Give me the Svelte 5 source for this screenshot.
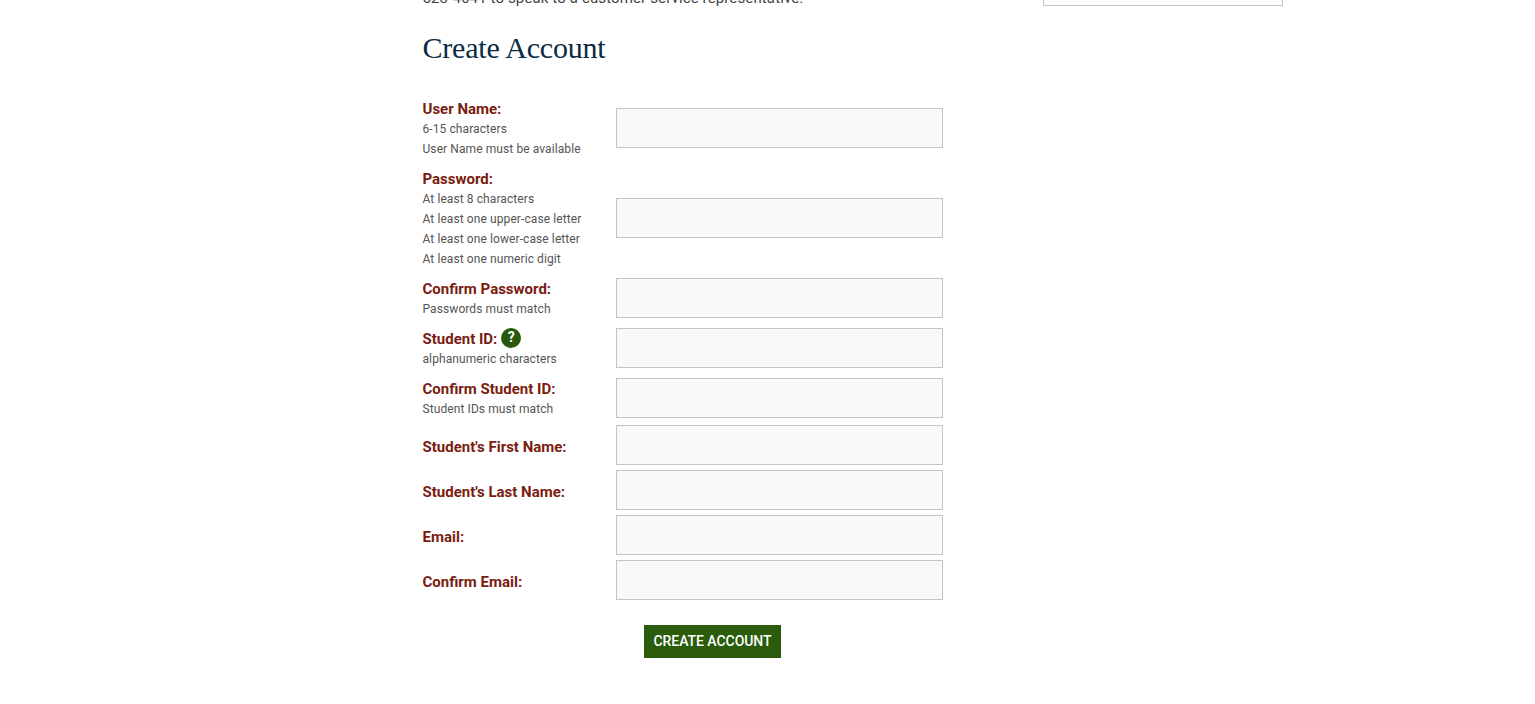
<script lang="ts">
  type Field = { label: string; hints?: string[]; help?: boolean; kind: string; type?: string };

  const fields: Field[] = [
    { label: 'User Name:', hints: ['6-15 characters', 'User Name must be available'], kind: 'three' },
    {
      label: 'Password:',
      hints: ['At least 8 characters', 'At least one upper-case letter', 'At least one lower-case letter', 'At least one numeric digit'],
      kind: 'five',
      type: 'password'
    },
    { label: 'Confirm Password:', hints: ['Passwords must match'], kind: 'two', type: 'password' },
    { label: 'Student ID:', hints: ['alphanumeric characters'], help: true, kind: 'two' },
    { label: 'Confirm Student ID:', hints: ['Student IDs must match'], kind: 'two last' },
    { label: "Student's First Name:", kind: 'one' },
    { label: "Student's Last Name:", kind: 'one' },
    { label: 'Email:', kind: 'one', type: 'email' },
    { label: 'Confirm Email:', kind: 'one', type: 'email' }
  ];
</script>

<div class="page">
  <main class="content">
    <p class="intro">523-4641 to speak to a customer service representative.</p>
    <h1>Create Account</h1>
    <form onsubmit={(e) => e.preventDefault()}>
      {#each fields as f}
        <div class="row {f.kind}">
          <div class="label">
            <label for={f.label}>{f.label}</label>
            {#if f.help}
              <span class="help">?</span>
            {/if}
            {#each f.hints ?? [] as hint}
              <span class="hint">{hint}</span>
            {/each}
          </div>
          <input id={f.label} type={f.type ?? 'text'} />
        </div>
      {/each}
      <button type="submit">CREATE ACCOUNT</button>
    </form>
  </main>
  <aside class="side"></aside>
</div>

<style>
  :global(body) {
    margin: 0;
    background: #fff;
    font-family: Roboto, "Liberation Sans", sans-serif;
  }

  .page {
    display: flex;
    justify-content: space-between;
    align-items: flex-start;
    width: 861px;
    height: 704px;
    margin-left: 422px;
    overflow: hidden;
  }

  .content {
    width: 521px;
  }

  .intro {
    margin: -12px 0 0;
    padding-left: 0.5px;
    font-size: 15px;
    line-height: 20px;
    letter-spacing: 0.13px;
    color: #444;
  }

  h1 {
    margin: 19px 0 0;
    padding-left: 0.5px;
    font-family: "Liberation Serif", serif;
    font-size: 30px;
    line-height: 42px;
    font-weight: 400;
    letter-spacing: -0.2px;
    color: #0b2b45;
  }

  form {
    margin-top: 30px;
  }

  .row {
    display: flex;
    justify-content: space-between;
    align-items: center;
    height: 40px;
    margin-bottom: 10px;
  }

  .row.three {
    height: 60px;
  }

  .row.five {
    height: 100px;
  }

  .row.two.last {
    margin-bottom: 8px;
  }

  .row.one {
    margin-bottom: 5px;
  }

  .label {
    box-sizing: border-box;
    width: 194px;
    min-width: 0;
    padding-left: 0.5px;
  }

  label {
    font-size: 15px;
    line-height: 20px;
    font-weight: 700;
    color: #7a1c10;
  }

  .hint {
    display: block;
    font-size: 12px;
    line-height: 20px;
    letter-spacing: 0.09px;
    color: #555;
  }

  .help {
    display: inline-block;
    width: 20px;
    height: 20px;
    margin-top: -4px;
    margin-bottom: -2px;
    border-radius: 50%;
    background: #275a0c;
    color: #fff;
    font-size: 14px;
    line-height: 19px;
    font-weight: 700;
    text-align: center;
    vertical-align: 2px;
  }

  input {
    box-sizing: border-box;
    width: 327px;
    height: 40px;
    margin: 0 0 2px;
    border: 1px solid #c4c4c4;
    background: #f9f9f9;
  }

  .one input {
    margin-bottom: 4px;
  }

  button {
    display: block;
    width: 137px;
    height: 33px;
    margin: 23px 0 0 222px;
    padding: 0 0 1px;
    border: 0;
    background: #2b5c0b;
    color: #fff;
    font-family: inherit;
    font-size: 14px;
    font-weight: 500;
    letter-spacing: -0.05px;
  }

  .side {
    box-sizing: border-box;
    width: 240px;
    height: 6px;
    border: 1px solid #c4c4c4;
    border-top: 0;
  }
</style>
